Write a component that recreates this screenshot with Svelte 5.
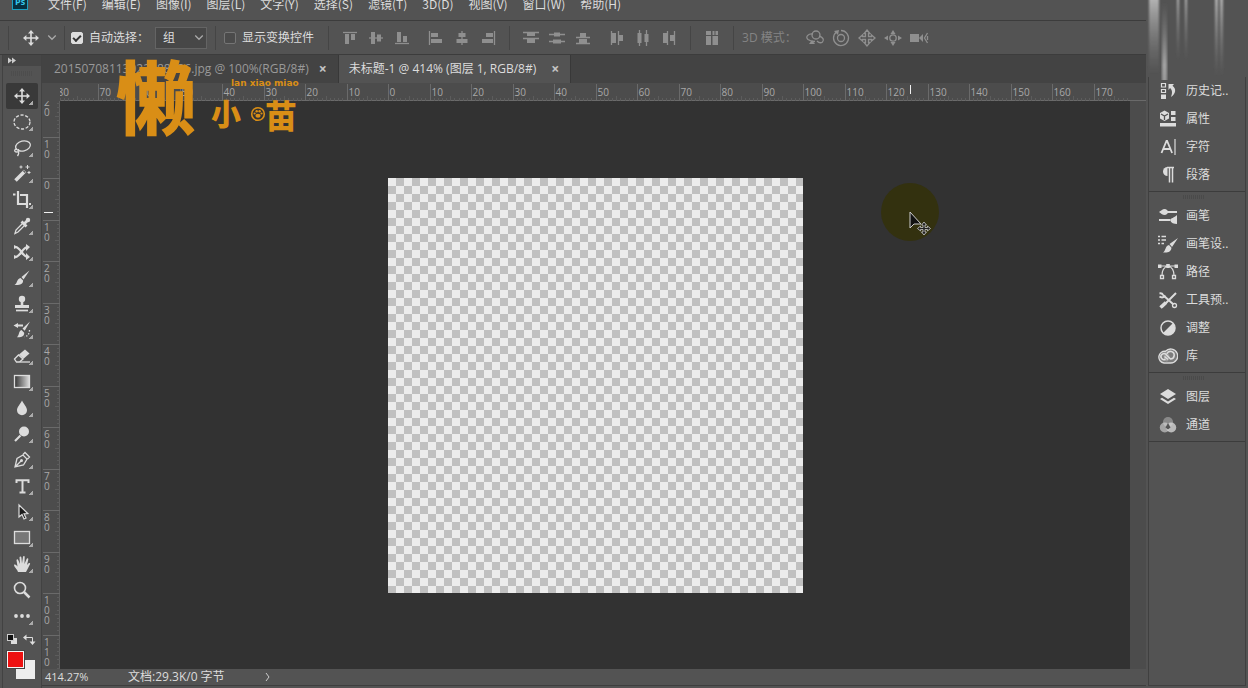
<script lang="ts">
  type Tool = { name: string; icon: string; flyout?: boolean };

  const menus = [
    "文件(F)",
    "编辑(E)",
    "图像(I)",
    "图层(L)",
    "文字(Y)",
    "选择(S)",
    "滤镜(T)",
    "3D(D)",
    "视图(V)",
    "窗口(W)",
    "帮助(H)",
  ];

  // All tool icons share a 20x20 view box, "f" marks filled shapes.
  const tools: Tool[] = [
    {
      name: "移动工具",
      icon: '<path d="M10 3v14M3 10h14" stroke-width="1.6"/><path class="f" d="M10 2l3 3.4H7zM10 18l3-3.4H7zM2 10l3.4-3v6zM18 10l-3.4-3v6z"/>',
    },
    {
      name: "椭圆选框工具",
      icon: '<ellipse cx="10" cy="10" rx="8" ry="7" stroke-dasharray="3.2 1.6"/>',
    },
    {
      name: "套索工具",
      icon: '<ellipse cx="11" cy="8" rx="7.5" ry="5" transform="rotate(-14 11 8)"/><path d="M5 11c-3 0-3 3-.5 3S8 11.500 5.500 11.300M6 13.500c1 1 .6 3-.5 4.500"/>',
    },
    {
      name: "魔棒工具",
      icon: '<path d="M3.500 16.500L13 7" stroke-width="3.600"/><path d="M11.300 6.600l2 2" stroke="#535353"/><path d="M15.500 1v4M13.500 3h4M17 7v3M15.500 8.500h3M9 1.500v3M7.500 3h3" stroke-width="1"/>',
    },
    {
      name: "裁剪工具",
      icon: '<path d="M6 1v13h9M1 4.500h2.500M8 5h7v13M17 14h2" stroke-width="2.200"/>',
    },
    {
      name: "吸管工具",
      icon: '<path d="M3 17.500l1-3.500 7-7 2 2-7 7z"/><path d="M9.500 5.500l5 5M12 8l3.500-3.500" stroke-width="2.800"/><circle class="f" cx="16" cy="4" r="2.200"/>',
    },
    {
      name: "内容感知移动工具",
      icon: '<path d="M3 5c6 0 7 10 13 10M3 15c6 0 7-10 13-10" stroke-width="2.200"/><path class="f" d="M14 2l4 3-4 4zM14 11l4 4-4 3zM2 3l4 2-4 2zM2 13l4 2-4 2z"/>',
    },
    {
      name: "画笔工具",
      icon: '<path class="f" d="M17.500 2.500L9.500 9l2 2.500zM8.600 10l2.500 2.500c0 4-4 5-8.600 4.500 3-1.500 2-6 6.100-7z"/>',
    },
    {
      name: "仿制图章工具",
      icon: '<circle class="f" cx="10" cy="5" r="3.200"/><path class="f" d="M8.700 7h2.600v4H17v3H3v-3h5.700z"/><path d="M4 16.500h12" stroke-width="1.700"/>',
    },
    {
      name: "历史记录画笔工具",
      icon: '<path class="f" d="M18 1.500L10.500 8.500l2.200 2.200zM9.500 10l2.700 2.700c0 3.800-3 4.800-7.200 4.500 2.500-2 1.500-6.500 4.500-7.200zM1.500 5.500L6 3v1.500h5v2H6V8z"/><path d="M17.500 10c0 4-2 6-5 7" stroke-dasharray="1.400 1.600"/>',
    },
    {
      name: "橡皮擦工具",
      icon: '<path d="M2.500 13l4-4 4.500 4-3.500 3H4.500z"/><path class="f" d="M7 8.500l6-5 4.500 4-6 5.200z"/><path d="M8 16h10"/>',
    },
    {
      name: "渐变工具",
      icon: '<defs><linearGradient id="fade"><stop stop-color="#333"/><stop offset="1" stop-color="#ddd"/></linearGradient></defs><rect x="2.500" y="3.500" width="15" height="12" style="fill:url(#fade)"/>',
    },
    {
      name: "模糊工具",
      icon: '<path class="f" d="M10 2.500c2 4 5 6.500 5 9.800a5 5 0 0 1-10 0C5 9 8 6.500 10 2.500z"/>',
    },
    {
      name: "减淡工具",
      icon: '<circle class="f" cx="12" cy="7.500" r="5"/><path d="M8.500 11.500L3 17" stroke-width="2.200"/>',
    },
    {
      name: "钢笔工具",
      icon: '<path d="M3 17l2-8.500 6-3.500 4 4-3.500 6zM3.500 16.500L9 11M11 4.500l2-2L17.500 7l-2 2"/><circle class="f" cx="9.500" cy="10.500" r="1.500"/>',
    },
    {
      name: "文字工具",
      icon: '<path d="M4.500 7V4.200h12V7M10.500 4v12.500M7.500 16.500h6" stroke-width="2"/>',
    },
    {
      name: "路径选择工具",
      icon: '<path d="M7 3v12l3-2.500 2 4.500 2-1-2-4.200 3.800-.3z" style="fill:#1b1b1b" stroke-width="1.200"/>',
    },
    {
      name: "矩形工具",
      icon: '<rect x="2.500" y="3.500" width="15" height="12" style="fill:#777"/>',
    },
    {
      name: "抓手工具",
      icon: '<path class="f" d="M6 18c-1-3-4-5-4-7.200 1-1 2.200 0 3.500 1.700L4.500 6.200c.2-1.200 1.500-1 1.800 0L8 10l-.5-6.500c.2-1.300 1.700-1.200 1.900 0L10 9.500l1-6.800c.3-1.200 1.700-1 1.700.3L12.500 10l2.200-5.200c.6-1 1.800-.5 1.600.7L15 11l1.600-1.800c1-.7 1.900.1 1.400 1.100-1.500 3-2.500 5.200-4 7.700z"/>',
    },
    {
      name: "缩放工具",
      icon: '<circle cx="8" cy="8" r="5.500" stroke-width="1.600"/><path d="M12 12l5.500 5.500" stroke-width="2.500"/>',
      flyout: false,
    },
    {
      name: "编辑工具栏",
      icon: '<g class="f"><circle cx="4" cy="10" r="1.900"/><circle cx="10" cy="10" r="1.900"/><circle cx="16" cy="10" r="1.900"/></g>',
    },
  ];

  const alignGroups = [
    [
      ["顶对齐", '<path d="M3 4.500h14"/><path class="f" d="M5 6h4v10H5zM11 6h4v6h-4z"/>'],
      ["垂直居中对齐", '<path d="M3 10h14"/><path class="f" d="M5 4h4v12H5zM11 6.500h4v7h-4z"/>'],
      ["底对齐", '<path d="M3 15.500h14"/><path class="f" d="M5 4h4v10H5zM11 8h4v6h-4z"/>'],
      ["左对齐", '<path d="M3.500 3v14"/><path class="f" d="M5 5h7v4H5zM5 11h11v4H5z"/>'],
      ["水平居中对齐", '<path d="M10 3v14"/><path class="f" d="M6.500 5h7v4h-7zM4.500 11h11v4h-11z"/>'],
      ["右对齐", '<path d="M16.500 3v14"/><path class="f" d="M8 5h7v4H8zM4 11h11v4H4z"/>'],
    ],
    [
      ["按顶分布", '<path d="M2 4.500h16M2 10.500h16"/><path class="f" d="M6 5h8v3H6zM6 11h8v4H6z"/>'],
      ["垂直居中分布", '<path d="M2 6.500h16M2 13.500h16"/><path class="f" d="M7 4.500h6v4H7zM6 11.500h8v4H6z"/>'],
      ["按底分布", '<path d="M3 9.500h14M3 15.500h14"/><path class="f" d="M7 5h6v4H7zM6 11h8v4H6z"/>'],
      ["按左分布", '<path d="M4.500 3v14M11.500 3v14"/><path class="f" d="M5 5h4v10H5zM12 7h4v6h-4z"/>'],
      ["水平居中分布", '<path d="M6.500 2v16M13.500 2v16"/><path class="f" d="M4.500 5h4v10h-4zM11.500 6h4v8h-4z"/>'],
      ["按右分布", '<path d="M8.500 3v14M15.500 3v14"/><path class="f" d="M4 5h4v10H4zM11 7h4v6h-4z"/>'],
    ],
    [
      ["自动对齐图层", '<path class="f" d="M4 3h5v4H4zM10.500 3h2v4h-2zM13.500 3H16v4h-2.500zM4 8h5v9H4zM10.500 8H16v9h-5.500z"/>'],
    ],
  ];

  const modes3d = [
    ["旋转 3D 对象", '<circle cx="11" cy="7" r="4"/><path d="M8 6C3 5.500 0 9 3 11.500c2 1.500 4 2 7 2M14 8c4 1 5.500 4 3.500 6-2 1.500-4 .5-5.500-1"/><path class="f" d="M4 16l3-4 3 4z"/>'],
    ["滚动 3D 对象", '<circle cx="10" cy="10" r="3.500"/><path d="M5.500 4A7.500 7.500 0 1 0 10 2.500"/><path class="f" d="M3 3l5-1-1 5z"/>'],
    ["拖动 3D 对象", '<path d="M10 2l3 3.500h-1.500v3h3V7L18 10l-3.500 3v-1.500h-3v3H13L10 18l-3-3.500h1.500v-3h-3V13L2 10l3.500-3v1.500h3v-3H7z"/>'],
    ["滑动 3D 对象", '<circle cx="10" cy="10" r="3.200"/><path class="f" d="M10 2l2.500 4h-5zM10 18l2.500-4h-5zM1 10l4-2.500v5zM19 10l-4-2.500v5z"/>'],
    ["缩放 3D 相机", '<path class="f" d="M1 6h9v8H1zM10 10l4-4v8z"/><path d="M18.500 5l-3 5 3 5M18.500 8v4"/>'],
  ];

  const panelGroups = [
    [
      ["历史记..", '<path d="M3.500 2.500h4v3.500h-4zM3.500 8.500h4v3h-4z" stroke-width="1.200"/><path class="f" d="M3 13.500h5V18H3zM10.500 3h5.500l-1.500 1.700c4 3 3.500 8-1.500 11.300 1.500-4 1.500-7-1-9l-1.500 2z"/>'],
      ["属性", '<path class="f" d="M2 4l4.500-2.500L11 4v5.500L6.500 12 2 9.500zM13 2h4.500v4H13zM13 8h4.500v4H13zM2 14h16v3.500H2z"/><path d="M3 5l3.500 2L10 5M6.500 7v4" stroke="#535353"/>'],
      ["字符", '<path d="M3.500 16L8.500 4h.6l5 12M5.500 12h7" stroke-width="1.800"/><path d="M17 2v16" stroke-width="1.200"/>'],
      ["段落", '<path class="f" d="M9.500 2a4.500 4.500 0 0 0 0 9z"/><path d="M9 2.500h7M11.500 2.500v15M14.500 2.500v15" stroke-width="1.500"/>'],
    ],
    [
      ["画笔", '<path d="M8 6h11M1 14h11" stroke-width="2"/><path class="f" d="M1 6c2-1 3-3 6-3 4 1 4 5 0 6-3 0-4-2-6-3zM19 9v9c-3 0-6-1-7-4 1-2 4-2 7-5z"/>'],
      ["画笔设..", '<path class="f" d="M20 4l-8.500 6 2.500 3zM11 11l2.500 2.800C13 18 10 19 5 18.500c3-2 2-6.500 6-7.500z"/><path d="M0 2.500h2M3.500 2.500H8M0 6h2M3.500 6H8M0 9.500h2M3.500 9.500H6"/>'],
      ["路径", '<path d="M2 4h16M4 13.500c0-6 2-8.500 6-9.500M16 13.500c0-6-2-8.500-6-9.500" stroke-width="1.200"/><path class="f" d="M0 2.500h3.500V6H0zM16.500 2.500H20V6h-3.500zM8.200 2h3.600v4H8.200z"/><path d="M2.500 13.500h3v3h-3zM14.500 13.500h3v3h-3z"/>'],
      ["工具预..", '<path d="M5 5l10.500 9.500M4 17L18 3" stroke-width="2"/><path d="M2.500 17.500L8 12.500" stroke-width="3.500"/><path d="M1.500 3.500c2-.5 3 .5 3.500 1.500M1.500 6.500c2 1.500 5 1 5.500-1" stroke-width="2"/><circle cx="16.500" cy="15.500" r="2"/>'],
      ["调整", '<circle cx="10" cy="10" r="7" stroke-width="1.500"/><path class="f" d="M15 5A7 7 0 1 1 5 15z"/>'],
      ["库", '<circle cx="12.500" cy="10" r="7" class="f" opacity=".3"/><circle cx="6" cy="11" r="5.500" class="f" opacity=".3"/><path d="M7.500 5.300A7 7 0 1 1 12.500 17H6A5.700 5.700 0 1 1 7.500 5.300z"/><path d="M10 13.500l-3.500-3M7.500 13.200A3 3 0 1 1 8.500 9l4 4a3.800 3.800 0 1 0-3.600-5.300" stroke-width="1.600"/>'],
    ],
    [
      ["图层", '<path class="f" d="M10 2l8 5-8 5-8-5zM2 12l2-1.200 6 3.700 6-3.700 2 1.200-8 5z"/>'],
      ["通道", '<g class="f"><circle cx="10" cy="7" r="5" opacity=".4"/><circle cx="6.800" cy="12.500" r="5" opacity=".6"/><circle cx="13.200" cy="12.500" r="5" opacity=".75"/></g><path d="M10 8l2.500 4.500-2.500 2-2.500-2z" style="fill:#555" stroke="none"/>'],
    ],
  ];

  const image = 415;
  const scale = image / 100;
  const cursor = { x: 850, y: 111 };

  let canvasWidth = $state(1070);
  let canvasHeight = $state(568);
  let activeTool = $state("移动工具");
  let autoSelect = $state(true);
  let showTransform = $state(false);

  let originX = $derived(Math.round((canvasWidth - image) / 2));
  let originY = $derived(Math.round((canvasHeight - image) / 2));
  let ticksX = $derived(makeTicks(originX, canvasWidth));
  let ticksY = $derived(makeTicks(originY, canvasHeight));

  function makeTicks(origin: number, length: number) {
    const ticks = [];
    for (let v = -Math.ceil(origin / scale) - 4; origin + v * scale < length; v++) {
      ticks.push({ value: v, pos: Math.round(origin + v * scale) + 0.5 });
    }
    return ticks;
  }
</script>

{#snippet icon(body: string)}
  <svg class="icon" viewBox="0 0 20 20" aria-hidden="true">{@html body}</svg>
{/snippet}

<div class="app">
  <div class="main">
    <nav class="menubar">
      <svg class="ps" viewBox="0 0 16 16" aria-hidden="true">
        <rect x="0.5" y="0.5" width="15" height="15" />
        <text x="3" y="11">Ps</text>
      </svg>
      {#each menus as menu}
        <button class="menu">{menu}</button>
      {/each}
    </nav>

    <div class="options">
      <div class="group first">
        <button class="tool-preset" aria-label="移动工具预设">{@render icon(tools[0].icon)}</button>
        <svg class="chevron" viewBox="0 0 8 8" aria-hidden="true"><path d="M1 2l3 3 3-3" /></svg>
      </div>
      <div class="group">
        <label><input type="checkbox" bind:checked={autoSelect} />自动选择：</label>
        <div class="select">
          <select aria-label="自动选择">
            <option>组</option>
            <option>图层</option>
          </select>
          <svg class="chevron" viewBox="0 0 8 8" aria-hidden="true"><path d="M1 2l3 3 3-3" /></svg>
        </div>
      </div>
      <div class="group wide">
        <label><input type="checkbox" bind:checked={showTransform} />显示变换控件</label>
      </div>
      {#each alignGroups as group}
        <div class="group align">
          {#each group as [name, body]}
            <button class="align-button" aria-label={name}>{@render icon(body)}</button>
          {/each}
        </div>
      {/each}
      <div class="group align">
        <span class="mode">3D 模式：</span>
        {#each modes3d as [name, body]}
          <button class="align-button" aria-label={name}>{@render icon(body)}</button>
        {/each}
      </div>
    </div>

    <div class="workspace">
      <div class="toolbar">
        <div class="collapse">
          <svg viewBox="0 0 8 6" aria-hidden="true"><path d="M0 0l4 3-4 3zM4 0l4 3-4 3z" /></svg>
        </div>
        <div class="grip"></div>
        {#each tools as tool}
          <button
            class="tool"
            class:active={tool.name === activeTool}
            aria-label={tool.name}
            onclick={() => (activeTool = tool.name)}
          >
            {@render icon(tool.icon)}
            {#if tool.flyout !== false}<i class="flyout"></i>{/if}
          </button>
        {/each}
        <svg class="swatches" viewBox="0 0 32 50" role="img" aria-label="前景色和背景色">
          <rect x="5" y="9" width="6" height="6" fill="#ddd" />
          <rect x="1.500" y="5.500" width="6" height="6" fill="#111" stroke="#ccc" />
          <path d="M20 8.500h6.500v5" fill="none" stroke="#ddd" />
          <path d="M17 8.500l3.500-3v6zM26.500 16l-3-3.500h6z" fill="#ddd" />
          <rect x="10" y="31" width="19" height="19" fill="#ededed" />
          <rect x="0.500" y="21.500" width="18" height="18" fill="#333" stroke="#444" />
          <rect x="1.500" y="22.500" width="16" height="16" fill="#ee1111" stroke="#f5f5f5" />
        </svg>
      </div>

      <div class="document">
        <div class="tabs">
          <div class="tab">
            <span>20150708113022988536.jpg @ 100%(RGB/8#)</span>
            <button class="close" aria-label="关闭">×</button>
          </div>
          <div class="tab current">
            <span>未标题-1 @ 414% (图层 1, RGB/8#)</span>
            <button class="close" aria-label="关闭">×</button>
          </div>
        </div>
        <div class="view">
          <div class="corner"></div>
          <svg class="ruler top">
            {#each ticksX as { value, pos }}
              {#if value % 10 === 0}
                <line x1={pos} x2={pos} y1="1" y2="18" />
                <text x={pos + 1} y="13">{Math.abs(value)}</text>
              {:else}
                <line class="minor" x1={pos} x2={pos} y1={value % 5 === 0 ? 13 : 15} y2="18" />
              {/if}
            {/each}
            <line class="marker" x1={cursor.x + 0.5} x2={cursor.x + 0.5} y1="2" y2="11" />
          </svg>
          <svg class="ruler left">
            {#each ticksY as { value, pos }}
              {#if value % 10 === 0}
                <line y1={pos} y2={pos} x1="1" x2="18" />
                {#each String(Math.abs(value)) as digit, i}
                  <text x="2" y={pos + 10 + i * 10}>{digit}</text>
                {/each}
              {:else}
                <line class="minor" y1={pos} y2={pos} x1={value % 5 === 0 ? 13 : 15} x2="18" />
              {/if}
            {/each}
            <line class="marker" y1={cursor.y + 0.5} y2={cursor.y + 0.5} x1="2" x2="11" />
          </svg>
          <div class="canvas" bind:clientWidth={canvasWidth} bind:clientHeight={canvasHeight}>
            <div class="image" style="width: {image}px; height: {image}px"></div>
            <svg class="cursor" viewBox="0 0 60 60" style="left: {cursor.x - 30}px; top: {cursor.y - 30}px" aria-hidden="true">
              <circle cx="30" cy="30" r="29" fill="#33310f" />
              <path d="M30 30v16l4-4h7z" fill="#111" stroke="#ccc" />
              <path
                d="M44 40l2.500 3h-1.500v2.500h2.500v-1.500l3 2.500-3 2.500v-1.500h-2.500v2.500h1.500l-2.500 3-2.500-3h1.500v-2.500h-2.500v1.500l-3-2.500 3-2.500v1.500h2.500v-2.500h-1.500z"
                fill="#222"
                stroke="#ccc"
                stroke-width=".8"
              />
            </svg>
          </div>
          <div class="scrollbar"></div>
        </div>
        <div class="status">
          <span class="zoom">414.27%</span>
          <span>文档:29.3K/0 字节</span>
          <svg viewBox="0 0 6 10" aria-hidden="true"><path d="M1 1l3 4-3 4" /></svg>
        </div>
      </div>
    </div>
  </div>

  <aside>
    <svg class="streaks" viewBox="0 0 100 80" aria-hidden="true">
      <defs>
        <linearGradient id="down" x2="0" y2="1">
          <stop stop-color="#bbb" stop-opacity=".9" />
          <stop offset="1" stop-color="#888" stop-opacity="0" />
        </linearGradient>
        <linearGradient id="up" x2="0" y2="1">
          <stop stop-color="#888" stop-opacity="0" />
          <stop offset=".8" stop-color="#aaa" stop-opacity=".9" />
          <stop offset="1" stop-color="#999" />
        </linearGradient>
        <filter id="soft"><feGaussianBlur stdDeviation="1 0" /></filter>
      </defs>
      <g fill="url(#down)" filter="url(#soft)">
        <rect x="3" width="10" height="74" />
        <rect x="31" width="2" height="60" />
        <rect x="39" width="2" height="60" />
        <rect x="69" width="3" height="76" />
        <rect x="74" width="3" height="76" />
      </g>
      <rect x="16" y="2" width="5" height="78" fill="url(#up)" filter="url(#soft)" />
    </svg>
    <div class="panels">
      {#each panelGroups as group}
        <div class="panel-group">
          {#each group as [name, body]}
            <button class="panel">{@render icon(body)}<span>{name}</span></button>
          {/each}
        </div>
      {/each}
    </div>
  </aside>

  <div class="watermark">
    <span class="big">懒</span>
    <span class="small">小</span>
    <svg viewBox="0 0 16 16" aria-hidden="true">
      <circle cx="8" cy="8" r="6.300" fill="none" stroke="#d98e16" stroke-width="1.600" />
      <g fill="#d98e16">
        <ellipse cx="8" cy="9.800" rx="2.600" ry="2" />
        <circle cx="4.600" cy="7.500" r="1.100" />
        <circle cx="6.700" cy="5.300" r="1.200" />
        <circle cx="9.600" cy="5.300" r="1.200" />
        <circle cx="11.500" cy="7.500" r="1.100" />
      </g>
    </svg>
    <span class="sprout">苗</span>
    <span class="latin">lan xiao miao</span>
  </div>
</div>

<style>
  :global(body) {
    background: #535353;
  }
  .app {
    position: relative;
    display: grid;
    grid-template-columns: minmax(0, 1fr) 102px;
    height: 100vh;
    overflow: hidden;
    background: #535353;
    color: #dcdcdc;
    font: 12px/16px "Open Sans", "Noto Sans CJK SC", sans-serif;
  }
  button,
  select {
    padding: 0;
    border: 0;
    background: none;
    color: inherit;
    font: inherit;
  }
  .main {
    display: flex;
    flex-direction: column;
    min-width: 0;
  }
  .icon {
    width: 20px;
    height: 20px;
    fill: none;
    stroke: currentColor;
    stroke-width: 1.3;
  }
  .icon :global(.f) {
    fill: currentColor;
    stroke: none;
  }

  .menubar {
    display: flex;
    align-items: flex-start;
    gap: 15px;
    height: 20px;
    padding-left: 12px;
    border-bottom: 1px solid #3c3c3c;
    font-family: "Noto Sans CJK SC", sans-serif;
    white-space: nowrap;
  }
  .menu {
    margin-top: -4px;
  }
  .ps {
    width: 16px;
    height: 16px;
    margin: -6px 5px 0 0;
    font: bold 9px "Open Sans", sans-serif;
  }
  .ps rect {
    fill: #07303f;
    stroke: #1d9fc0;
  }
  .ps text {
    fill: #35c5e8;
  }

  .options {
    display: flex;
    align-items: center;
    height: 33px;
    padding-left: 8px;
    border-bottom: 1px solid #3c3c3c;
    white-space: nowrap;
  }
  .group {
    display: flex;
    align-items: center;
    height: 24px;
    padding: 0 8px 0 6px;
    border-left: 1px solid #454545;
  }
  .group.first {
    gap: 6px;
    padding: 0 7px 0 12px;
  }
  .group.wide {
    padding: 0 14px 0 8px;
  }
  .group.align {
    padding: 0 8px;
    color: #8f8f8f;
  }
  .tool-preset {
    display: flex;
  }
  .chevron {
    width: 10px;
    height: 10px;
    fill: none;
    stroke: #aaa;
  }
  label {
    display: flex;
    align-items: center;
    gap: 6px;
  }
  input {
    appearance: none;
    display: grid;
    place-items: center;
    width: 12px;
    height: 12px;
    margin: 0;
    border: 1px solid #757575;
    border-radius: 2px;
    background: #4b4b4b;
  }
  input:checked {
    border-color: #ddd;
    background: #ddd;
  }
  input:checked::after {
    content: "";
    width: 6px;
    height: 3px;
    border: solid #333;
    border-width: 0 0 2px 2px;
    transform: rotate(-45deg);
  }
  .select {
    position: relative;
    margin-left: 6px;
  }
  .select select {
    appearance: none;
    width: 52px;
    height: 22px;
    padding-left: 7px;
    border: 1px solid #646464;
    background: #474747;
  }
  .select .chevron {
    position: absolute;
    right: 3px;
    top: 6px;
  }
  .align-button {
    display: grid;
    place-items: center;
    width: 26px;
    height: 22px;
  }
  .align-button:nth-child(4) {
    margin-left: 8px;
  }
  .mode {
    padding-right: 5px;
    color: #848484;
  }
  .mode ~ .align-button {
    margin-left: 0;
  }

  .workspace {
    display: flex;
    flex: 1;
    min-height: 0;
  }
  .toolbar {
    display: flex;
    flex-direction: column;
    width: 38px;
    margin-left: 2px;
    border: solid #424242;
    border-width: 0 1px;
  }
  .collapse {
    height: 11px;
    padding-left: 5px;
    background: #464646;
  }
  .collapse svg {
    display: block;
    width: 8px;
    height: 11px;
    fill: #ccc;
  }
  .grip {
    width: 22px;
    height: 5px;
    margin: 5px auto 7px;
    background: repeating-linear-gradient(90deg, #4d4d4d 0 1px, #535353 1px 2px);
  }
  .tool {
    position: relative;
    display: grid;
    flex: none;
    place-items: center;
    width: 32px;
    height: 26px;
    margin-left: 3px;
  }
  .tool.active {
    border-radius: 2px;
    background: #393939;
  }
  .flyout {
    position: absolute;
    right: 5px;
    bottom: 4px;
    width: 4px;
    height: 4px;
    background: linear-gradient(135deg, transparent 50%, #aaa 50%);
  }
  .swatches {
    flex: none;
    width: 32px;
    height: 50px;
    margin-left: 3px;
  }

  .document {
    display: flex;
    flex: 1;
    flex-direction: column;
    min-width: 0;
    padding-bottom: 2px;
  }
  .tabs {
    display: flex;
    height: 28px;
    background: #434343;
    white-space: nowrap;
  }
  .tab {
    display: flex;
    align-items: center;
    gap: 9px;
    padding: 0 10px 0 12px;
    border-right: 1px solid #383838;
    color: #999;
  }
  .tab.current {
    gap: 14px;
    padding-left: 10px;
    background: #535353;
    color: #dcdcdc;
  }
  .close {
    width: 10px;
    color: #c4c4c4;
    font-size: 14px;
    font-weight: bold;
  }
  .view {
    display: grid;
    flex: 1;
    grid-template: 18px minmax(0, 1fr) / 18px minmax(0, 1fr) 16px;
    min-height: 0;
    background: #4c4c4c;
  }
  .ruler {
    display: block;
    overflow: hidden;
    font-size: 10px;
  }
  .ruler.top {
    grid-column: 2 / 4;
    width: 100%;
    height: 18px;
    box-shadow: inset 0 -1px #6a6a6a;
  }
  .ruler.left {
    width: 18px;
    height: 100%;
    box-shadow: inset -1px 0 #606060;
  }
  .ruler line {
    stroke: #6a6a6a;
  }
  .ruler line.minor {
    stroke: #5c5c5c;
  }
  .ruler line.marker {
    stroke: #f0f0f0;
  }
  .ruler text {
    fill: #a8a8a8;
  }
  .canvas {
    position: relative;
    display: grid;
    place-content: center;
    overflow: hidden;
    background: #323232;
  }
  .image {
    background: repeating-conic-gradient(#c0c0c0 0 25%, #ececec 0 50%) 0 0 / 16px 16px;
  }
  .cursor {
    position: absolute;
    width: 60px;
    height: 60px;
  }
  .status {
    display: flex;
    align-items: center;
    height: 16px;
    padding-left: 3px;
    border-bottom: 1px solid #3e3e3e;
  }
  .zoom {
    width: 83px;
    font-size: 11px;
  }
  .status svg {
    width: 6px;
    height: 10px;
    margin-left: 40px;
    fill: none;
    stroke: #ccc;
  }

  aside {
    display: flex;
    flex-direction: column;
    min-width: 0;
  }
  .streaks {
    width: 100px;
    height: 80px;
    margin-bottom: -3px;
  }
  .panels {
    flex: 1;
    margin: 0 2px 2px;
    border: solid #404040;
    border-width: 0 1px 1px;
  }
  .panel-group {
    padding: 10px 0 2px;
    border-bottom: 1px solid #3c3c3c;
    background: repeating-linear-gradient(90deg, #4a4a4a 0 1px, transparent 1px 2px) 34px 3px / 22px 4px no-repeat;
  }
  .panel-group:first-child {
    padding-top: 0;
    background: none;
  }
  .panel {
    display: flex;
    align-items: center;
    gap: 8px;
    width: 100%;
    height: 28px;
    padding-left: 9px;
    white-space: nowrap;
  }

  .watermark {
    position: absolute;
    left: 114px;
    top: 54px;
    width: 186px;
    height: 84px;
    color: #d98e16;
    font-family: "Noto Sans CJK SC", sans-serif;
    font-weight: 900;
    pointer-events: none;
  }
  .watermark > * {
    position: absolute;
  }
  .big {
    left: 2px;
    top: 0;
    font-size: 80px;
    line-height: 78px;
  }
  .small {
    left: 97px;
    top: 42px;
    font-size: 30px;
    line-height: 32px;
  }
  .watermark svg {
    left: 136px;
    top: 52px;
    width: 16px;
    height: 16px;
  }
  .sprout {
    left: 151px;
    top: 42px;
    font-size: 32px;
    line-height: 36px;
  }
  .latin {
    left: 117px;
    top: 23px;
    font: bold 9px/12px "DejaVu Sans", sans-serif;
    white-space: nowrap;
  }
</style>
